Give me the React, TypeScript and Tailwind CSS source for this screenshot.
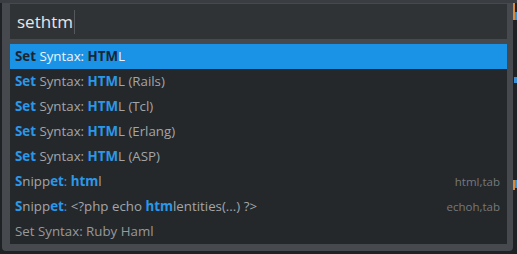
import React from 'react';

type Part = { t: string; m?: 'b' | 'c' };

interface Item {
  parts: Part[];
  hint?: string;
  dim?: boolean;
}

const items: Item[] = [
  { parts: [{ t: 'Set', m: 'b' }, { t: ' Syntax: ' }, { t: 'HTM', m: 'b' }, { t: 'L' }] },
  { parts: [{ t: 'Set', m: 'b' }, { t: ' Syntax: ' }, { t: 'HTM', m: 'b' }, { t: 'L (Rails)' }] },
  { parts: [{ t: 'Set', m: 'b' }, { t: ' Syntax: ' }, { t: 'HTM', m: 'b' }, { t: 'L (Tcl)' }] },
  { parts: [{ t: 'Set', m: 'b' }, { t: ' Syntax: ' }, { t: 'HTM', m: 'b' }, { t: 'L (Erlang)' }] },
  { parts: [{ t: 'Set', m: 'b' }, { t: ' Syntax: ' }, { t: 'HTM', m: 'b' }, { t: 'L (ASP)' }] },
  {
    parts: [{ t: 'S', m: 'b' }, { t: 'nipp' }, { t: 'et', m: 'b' }, { t: ':', m: 'c' }, { t: ' ' }, { t: 'htm', m: 'b' }, { t: 'l' }],
    hint: 'html,tab',
  },
  {
    parts: [
      { t: 'S', m: 'b' },
      { t: 'nipp' },
      { t: 'et', m: 'b' },
      { t: ':', m: 'c' },
      { t: ' <?php echo ' },
      { t: 'htm', m: 'b' },
      { t: 'lentities(...) ?>' },
    ],
    hint: 'echoh,tab',
  },
  { parts: [{ t: 'Set Syntax: Ruby Haml' }], dim: true },
];

function Row({ item, selected }: { item: Item; selected: boolean }) {
  return (
    <div
      className={`h-[25px] flex items-center justify-between pl-[5px] pr-[7px] text-[13.3px] ${
        selected ? 'bg-[#1a93e6]' : ''
      }`}
    >
      <span className={selected ? 'text-[#eef5fc]' : item.dim ? 'text-[#97999b]' : 'text-[#a3a5a7]'}>
        {item.parts.map((p, i) => {
          if (p.m === 'b') {
            return (
              <span key={i} className={`font-bold ${selected ? 'text-[#1a2530]' : 'text-[#2a98e8]'}`}>
                {p.t}
              </span>
            );
          }
          if (p.m === 'c') {
            return (
              <span key={i} className={selected ? '' : 'text-[#2a98e8]'}>
                {p.t}
              </span>
            );
          }
          return <span key={i}>{p.t}</span>;
        })}
      </span>
      {item.hint && <span className="text-[11.5px] text-[#76797c]">{item.hint}</span>}
    </div>
  );
}

export default function App() {
  return (
    <div className="w-[517px] h-[254px] overflow-hidden bg-[#1f2225] font-['Open_Sans',sans-serif]">
      <div className="h-[3px] bg-[#3a3d41]" />

      <div className="flex">
        <div className="w-[2px]" />

        {/* quick panel */}
        <div className="w-[511px] rounded-b-[4px] bg-[#46494d] pt-[1px] pl-[8px] pr-[6px] pb-[7px]">
          <div className="h-[35px] bg-[#303336] pl-[7px] flex items-center">
            <span className="text-[17px] text-[#e4e6e8]">sethtm</span>
            <span className="ml-[1px] w-px h-[24px] bg-[#55585c]" />
          </div>
          <div className="mt-[5px] bg-[#25282b]">
            {items.map((item, i) => (
              <Row key={i} item={item} selected={i === 0} />
            ))}
          </div>
        </div>

        {/* editor gutter peeking out on the right */}
        <div className="flex-1 flex flex-col">
          <div className="flex h-[17px]">
            <div className="w-[2px] bg-[#d98b3a]" />
            <div className="mt-[9px] w-[2px] h-[8px] bg-[#3b8fd6]" />
          </div>
          <div className="mt-[57px] ml-[1px] w-[3px] h-[6px] bg-[#3b8fd6]" />
          <div className="mt-[97px] flex h-[10px]">
            <div className="w-[2px] bg-[#d98b3a]" />
            <div className="w-[2px] h-[8px] bg-[#3b8fd6]" />
          </div>
        </div>
      </div>
    </div>
  );
}
